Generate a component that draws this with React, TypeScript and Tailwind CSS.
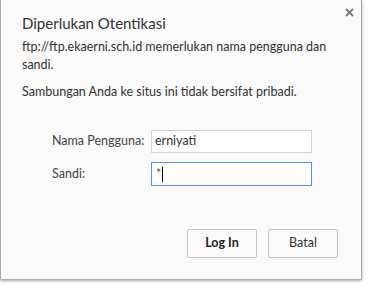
import React from "react";

const App = () => {
  return (
    <div className="w-[383px] h-[287px] bg-white overflow-hidden">
      <div
        className="relative w-[362px] h-[280px] bg-[#fafafa] border-l border-r border-b border-[#aaaaaa] rounded-b-[2px] shadow-[0_1px_3px_rgba(0,0,0,0.35)] text-[#333333]"
        style={{ fontFamily: 'Lato, "Noto Sans", sans-serif' }}
      >
        {/* close */}
        <button className="absolute left-[342px] top-[6px] w-[12px] h-[12px] flex items-center justify-center">
          <svg width="9" height="9" viewBox="0 0 9 9">
            <path d="M1 1L8 8M8 1L1 8" stroke="#767676" strokeWidth="1.8" />
          </svg>
        </button>

        <div className="pl-[21px] pt-[12px] pr-[14px]">
          <h1 className="text-[15px] leading-[22px] text-[#333]">Diperlukan Otentikasi</h1>
          <p className="mt-[4px] text-[12.5px] leading-[18px]">
            ftp://ftp.ekaerni.sch.id memerlukan nama pengguna dan sandi.
          </p>
          <p className="mt-[9px] text-[12.5px] leading-[18px]">
            Sambungan Anda ke situs ini tidak bersifat pribadi.
          </p>
        </div>

        <div className="mt-[29px] pl-[51px] flex flex-col gap-[9px] text-[12.5px]">
          <div className="flex items-center">
            <label className="w-[99px] text-[#444]">Nama Pengguna:</label>
            <div className="w-[161px] h-[23px] border border-[#d3d3d3] bg-white pl-[3px] flex items-center">
              erniyati
            </div>
          </div>
          <div className="flex items-center">
            <label className="w-[99px] text-[#444]">Sandi:</label>
            <div className="w-[161px] h-[24px] border border-[#4d90fe] bg-white pl-[4px] flex items-center text-[#555]">
              *<span className="inline-block w-px h-[15px] bg-black ml-px" />
            </div>
          </div>
        </div>

        <div className="mt-[43px] pr-[23px] flex justify-end gap-[11px] text-[12.5px]">
          <button className="w-[70px] h-[29px] border border-[#c4c4c4] rounded-[2px] bg-[#fafafa] font-bold text-[#222]">
            Log In
          </button>
          <button className="w-[70px] h-[29px] border border-[#c4c4c4] rounded-[2px] bg-[#fafafa] text-[#333]">
            Batal
          </button>
        </div>
      </div>
    </div>
  );
};

export default App;
